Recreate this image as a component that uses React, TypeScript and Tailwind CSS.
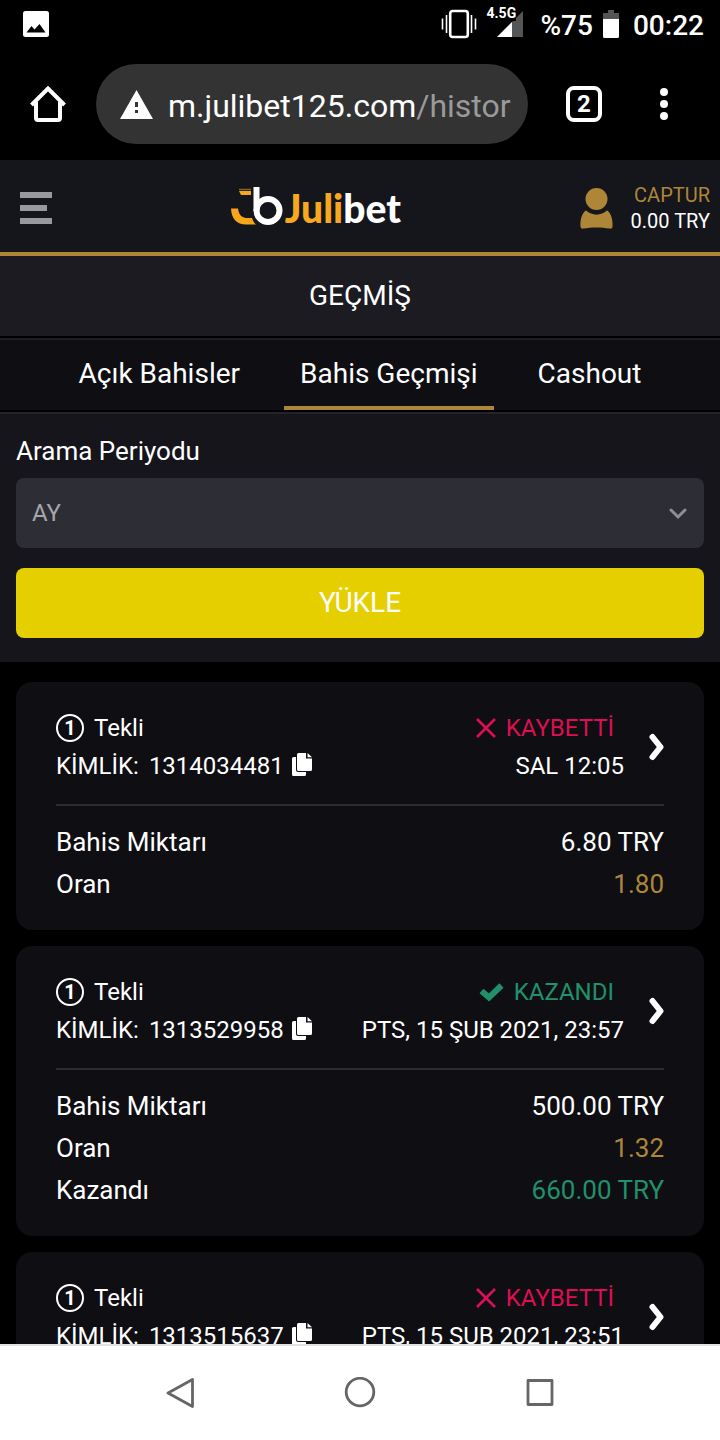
import React from 'react';

type Bet = {
  id: string;
  won: boolean;
  date: string;
  stake?: string;
  odds?: string;
  payout?: string;
};

const BETS: Bet[] = [
  { id: '1314034481', won: false, date: 'SAL 12:05', stake: '6.80 TRY', odds: '1.80' },
  { id: '1313529958', won: true, date: 'PTS, 15 ŞUB 2021, 23:57', stake: '500.00 TRY', odds: '1.32', payout: '660.00 TRY' },
  { id: '1313515637', won: false, date: 'PTS, 15 ŞUB 2021, 23:51' },
];

const TABS = ['Açık Bahisler', 'Bahis Geçmişi', 'Cashout'];

function StatusBar() {
  return (
    <div className="flex h-12 shrink-0 items-center justify-between pl-[23px] pr-4">
      <svg width="26" height="26" viewBox="0 0 26 26">
        <rect width="26" height="26" rx="2.5" fill="#fff" />
        <path d="M3.500 21.500 8.500 15l3 3.500L16.500 13 22.500 21.500z" fill="#000" />
      </svg>
      <div className="flex items-center text-[28px] leading-8 font-medium">
        <svg width="36" height="30" viewBox="0 0 36 30" fill="none" stroke="#fff">
          <rect x="9.200" y="2" width="17.600" height="26" rx="2.500" strokeWidth="2.600" />
          <path d="M5.500 6v18M30.500 6v18M1.500 9.500v11M34.500 9.500v11" strokeWidth="1.600" />
        </svg>
        <div className="relative ml-5 mr-[18px] h-[26px] w-[26px]">
          <svg width="26" height="26" viewBox="0 0 26 26">
            <path d="M26 0v26H0z" fill="#555" />
            <path d="M15 11v15H0z" fill="#fff" />
          </svg>
          <span className="absolute -left-2.5 -top-1.5 bg-black font-['Liberation_Sans_Narrow',Roboto,sans-serif] text-[14px] leading-4 font-bold">4.5G</span>
        </div>
        <span className="pt-1">%75</span>
        <svg className="ml-2.5 mr-3.5" width="16" height="28" viewBox="0 0 16 28">
          <path d="M5 0h6v3h5v7H0V3h5z" fill="#555" />
          <path d="M0 9h16v17.500a1.500 1.500 0 0 1-1.500 1.500h-13A1.500 1.500 0 0 1 0 26.500z" fill="#fff" />
        </svg>
        <span className="pt-1">00:22</span>
      </div>
    </div>
  );
}

function BrowserBar() {
  return (
    <div className="flex h-28 shrink-0 items-center pr-9">
      <button aria-label="Home" className="flex w-24 shrink-0 justify-center">
        <svg width="36" height="36" viewBox="0 0 36 36" fill="none" stroke="#fff" strokeWidth="4">
          <path d="M1.500 19 18 2.500 34.500 19" />
          <path d="M6 15.500V32a2 2 0 0 0 2 2h20a2 2 0 0 0 2-2V15.500" />
        </svg>
      </button>
      <button className="flex h-20 min-w-0 flex-1 items-center overflow-hidden rounded-full bg-[#333333] pl-6 pr-4 text-[32px] leading-10">
        <svg className="mr-[15px] shrink-0" width="33" height="29" viewBox="0 0 33 29">
          <path d="M16.500 0 33 29H0z" fill="#fff" />
          <path d="M15 12h3v5h-3zM15 20h3v3h-3z" fill="#333" />
        </svg>
        <span className="whitespace-nowrap pt-1">
          m.julibet125.com<span className="text-[#9a9a9a]">/histor</span>
        </span>
      </button>
      <button aria-label="Tabs" className="ml-[38px] flex h-9 w-9 shrink-0 items-center justify-center rounded-lg border-4 border-white font-['Liberation_Sans_Narrow',Roboto,sans-serif] text-[24px] leading-7 font-bold">
        2
      </button>
      <button aria-label="Menu" className="ml-[42px] flex w-10 shrink-0 justify-center">
        <svg width="8" height="32" viewBox="0 0 8 32" fill="#fff">
          <circle cx="4" cy="4" r="4" />
          <circle cx="4" cy="16" r="4" />
          <circle cx="4" cy="28" r="4" />
        </svg>
      </button>
    </div>
  );
}

function Logo() {
  return (
    <a href="#" aria-label="Julibet" className="flex items-center">
      <svg width="52" height="42" viewBox="0 0 52 42" fill="none">
        <path d="M8 4h12v4H10z" fill="#f5a81c" />
        <path d="M8 2.500h12" stroke="#8a611c" strokeWidth="1.500" />
        <path d="M0 21.500h7c1 7 4 9.500 10 9.500h4c1 3 2 5 4 6.500H15C6 37.500.5 32 0 21.500z" fill="#f9a51a" />
        <circle cx="37" cy="23.500" r="11.500" stroke="#fff" strokeWidth="6" />
        <path d="M25.500 0v24" stroke="#fff" strokeWidth="6" />
      </svg>
      <span className="ml-0.5 font-[Lato,sans-serif] text-[39px] leading-10 font-black">
        <span className="text-[#f7a81f]">Juli</span>bet
      </span>
    </a>
  );
}

function SiteHeader() {
  return (
    <header className="flex h-24 items-center justify-between border-b-4 border-[#ad8638] bg-[#15151c] pl-5 pr-2.5 pt-1">
      <button aria-label="Menü">
        <svg width="32" height="32" viewBox="0 0 32 32" fill="#99989d">
          <path d="M0 0h32v6H0zM0 13h27v6H0zM0 26h32v6H0z" />
        </svg>
      </button>
      <Logo />
      <div className="flex items-center gap-[18px]">
        <svg width="33" height="41" viewBox="0 0 33 41" fill="#ad8638">
          <circle cx="16.500" cy="11" r="11" />
          <path d="M6 22.500c6 5.500 15 5.500 21 0 4 2.500 6 9 5.500 16 0 1.500-1 2.500-3 2-8-1.500-18-1.500-26 0-2 .5-3-.5-3-2C0 31.500 2 25 6 22.500z" />
        </svg>
        <div className="text-right text-[20px] leading-[26px]">
          <div className="text-[#ad8638]">CAPTUR</div>
          <div>0.00 TRY</div>
        </div>
      </div>
    </header>
  );
}

function BetCard({ bet }: { bet: Bet }) {
  return (
    <article className="rounded-2xl bg-[#0e0e13] px-10 pt-[27px] pb-[25px]">
      <div className="flex items-center border-b-2 border-[#2b2b31] pb-[19px] text-[24px] leading-[38px]">
        <div className="flex-1">
          <div className="flex items-center gap-2.5">
            <span className="flex h-7 w-7 items-center justify-center rounded-full border-2 border-white text-[20px] leading-6 font-bold">1</span>
            Tekli
          </div>
          <div className="flex items-center">
            <span className="mr-2.5">KİMLİK:</span>
            {bet.id}
            <button aria-label="Kopyala" className="ml-2 pb-1">
              <svg width="20" height="23" viewBox="0 0 20 23" fill="#fff">
                <path d="M0 5.500A1.500 1.500 0 0 1 1.500 4H4v13a2 2 0 0 0 2 2h8v2.500a1.500 1.500 0 0 1-1.500 1.500h-11A1.500 1.500 0 0 1 0 21.500z" />
                <path d="M5 1.500A1.500 1.500 0 0 1 6.500 0H14v5.500h6V16.500a1.500 1.500 0 0 1-1.500 1.500h-12a1.500 1.500 0 0 1-1.500-1.500z" />
                <path d="M15.500 0 20 4.300h-4.500z" />
              </svg>
            </button>
          </div>
        </div>
        <div className="text-right">
          {bet.won ? (
            <div className="flex items-center justify-end gap-2.5 pr-2.5 text-[#20916a]">
              <svg width="25" height="19" viewBox="0 0 25 19" fill="none" stroke="currentColor" strokeWidth="6">
                <path d="M2.500 8 10 14.500 22.500 2.500" />
              </svg>
              KAZANDI
            </div>
          ) : (
            <div className="flex items-center justify-end gap-2.5 pr-2.5 text-[#dc0f52]">
              <svg width="20" height="20" viewBox="0 0 20 20" fill="none" stroke="currentColor" strokeWidth="2.600">
                <path d="m1 1 18 18M19 1 1 19" />
              </svg>
              KAYBETTİ
            </div>
          )}
          <div>{bet.date}</div>
        </div>
        <button aria-label="Detay" className="ml-6">
          <svg width="16" height="28" viewBox="0 0 16 28" fill="none" stroke="#fff" strokeWidth="6" strokeLinecap="round" strokeLinejoin="round">
            <path d="M4.500 4 12.500 14 4.500 24" />
          </svg>
        </button>
      </div>
      <dl className="grid grid-cols-[1fr_auto] pt-[15px] text-[26px] leading-[42px] [&>dd]:text-right">
        {bet.stake && (
          <>
            <dt>Bahis Miktarı</dt>
            <dd>{bet.stake}</dd>
            <dt>Oran</dt>
            <dd className="text-[#ad8638]">{bet.odds}</dd>
          </>
        )}
        {bet.payout && (
          <>
            <dt>Kazandı</dt>
            <dd className="text-[#20916a]">{bet.payout}</dd>
          </>
        )}
      </dl>
    </article>
  );
}

function SystemNav() {
  return (
    <nav className="flex h-24 shrink-0 items-center border-t-2 border-[#e2e0e2] bg-white px-[90px]">
      <button aria-label="Back" className="flex flex-1 justify-center">
        <svg width="30" height="30" viewBox="0 0 30 30" fill="none" stroke="#666" strokeWidth="2.800" strokeLinejoin="round">
          <path d="M27.500 1.500v27L3 15z" />
        </svg>
      </button>
      <button aria-label="Home screen" className="flex flex-1 justify-center">
        <svg width="32" height="32" viewBox="0 0 32 32" fill="none" stroke="#666" strokeWidth="2.800">
          <circle cx="16" cy="15" r="13.800" />
        </svg>
      </button>
      <button aria-label="Recent apps" className="flex flex-1 justify-center">
        <svg width="28" height="28" viewBox="0 0 28 28" fill="none" stroke="#666" strokeWidth="2.800" strokeLinejoin="round">
          <rect x="2" y="1.500" width="24" height="24" />
        </svg>
      </button>
    </nav>
  );
}

export default function App() {
  return (
    <div className="flex h-screen flex-col bg-black font-[Roboto,sans-serif] text-white">
      <StatusBar />
      <BrowserBar />
      <main className="min-h-0 flex-1 overflow-hidden">
        <SiteHeader />
        <h1 className="bg-[#1b1b21] text-center text-[28px] leading-[80px]">GEÇMİŞ</h1>
        <div className="mt-0.5 flex justify-center gap-7 border-y-2 border-t-[#1f1f24] border-b-black bg-[#0e0e13]">
          {TABS.map((tab, i) => (
            <button
              key={tab}
              className={`h-[70px] border-b-4 px-4 pt-0.5 text-[28px] leading-[64px] ${i === 1 ? 'border-[#ad8638]' : 'border-transparent'}`}
            >
              {tab}
            </button>
          ))}
        </div>
        <form className="border-t-2 border-[#232329] bg-[#15151b] px-4 pt-5 pb-6" onSubmit={(e) => e.preventDefault()}>
          <label htmlFor="period" className="block text-[26px] leading-[34px]">Arama Periyodu</label>
          <div className="relative mt-2.5">
            <select id="period" className="block h-[70px] w-full appearance-none rounded-lg bg-[#2d2d36] px-4 text-[24px] text-[#a5a5aa]">
              <option>AY</option>
            </select>
            <svg className="pointer-events-none absolute right-4 top-7" width="20" height="16" viewBox="0 0 20 16" fill="none" stroke="#8e8e94" strokeWidth="3" strokeLinecap="round">
              <path d="m3 4 7 7 7-7" />
            </svg>
          </div>
          <button className="mt-5 h-[70px] w-full rounded-lg bg-[#e5cf00] text-[28px]">YÜKLE</button>
        </form>
        <section className="flex flex-col gap-4 px-4 pt-5">
          {BETS.map((bet) => (
            <BetCard key={bet.id} bet={bet} />
          ))}
        </section>
      </main>
      <SystemNav />
    </div>
  );
}
